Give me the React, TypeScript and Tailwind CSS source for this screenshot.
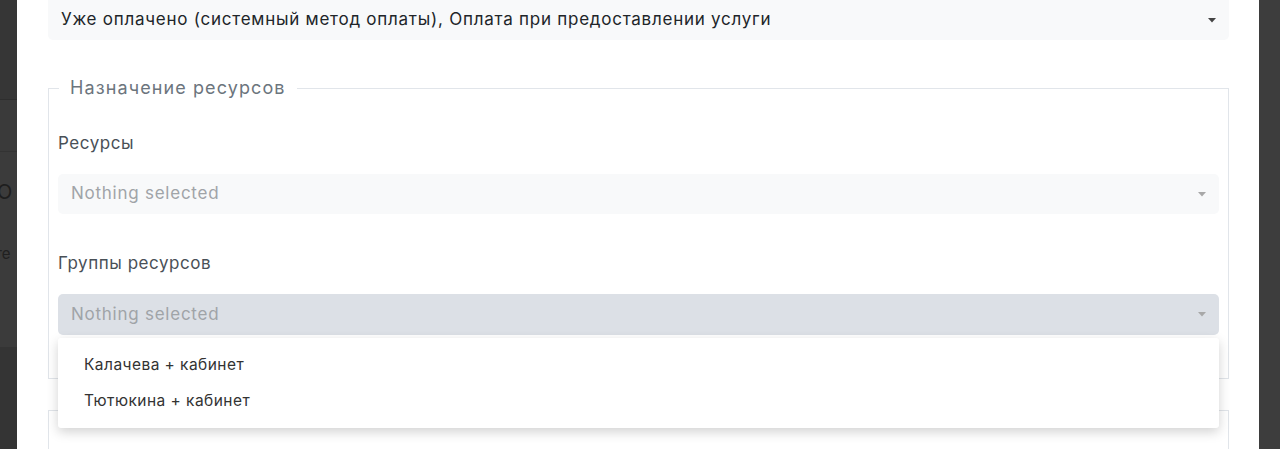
import React from "react";

function Caret({ color }: { color: string }) {
  return (
    <svg width="8" height="5" viewBox="0 0 8 5" className="shrink-0">
      <path d="M0 0 L8 0 L4 4.5 Z" fill={color} />
    </svg>
  );
}

export default function App() {
  const font = { fontFamily: "Inter, 'Noto Sans', sans-serif" };
  return (
    <div className="relative flex h-[449px] w-[1280px] overflow-hidden bg-[#3c3c3c]" style={font}>
      {/* left backdrop strip showing page behind */}
      <div className="flex w-[17px] shrink-0 flex-col bg-[#3a3a3a]">
        <div className="h-[100px] shrink-0 border-b border-[#2e2e2e] bg-[#363636]" />
        <div className="h-[52px] shrink-0 border-b border-[#333]" />
        <div className="flex h-[195px] shrink-0 flex-col overflow-hidden bg-[#3b3b3b]">
          <div className="mt-[30px] ml-[-8px] text-[20px] leading-none text-[#1e1e1e]">Ю</div>
          <div className="mt-[44px] ml-[-5px] text-[15px] leading-none text-[#202020]">те</div>
        </div>
        <div className="flex-1 bg-[#343434]" />
      </div>

      {/* modal */}
      <div className="flex w-[1242px] shrink-0 flex-col bg-white pl-[31px] pr-[30px]">
        <div className="flex h-[40px] shrink-0 items-center justify-between rounded-b-[5px] bg-[#f8f9fa] pl-[13px] pr-[13px] text-[17px] tracking-[0.75px] text-[#212529]">
          <span>Уже оплачено (системный метод оплаты), Оплата при предоставлении услуги</span>
          <Caret color="#444" />
        </div>

        <div className="relative mt-[48px] h-[291px] shrink-0 border border-[#e1e5ea] px-[9px]">
          <div className="absolute left-[10px] top-[-12px] bg-white px-[11px] text-[18px] leading-[22px] tracking-[1.1px] text-[#6c757d]">
            Назначение ресурсов
          </div>
          <div className="mt-[42px] text-[17px] leading-[24px] tracking-[0.55px] text-[#495057]">Ресурсы</div>
          <div className="mt-[19px] flex h-[40px] shrink-0 items-center justify-between rounded-[5px] bg-[#f8f9fa] pl-[13px] pr-[13px] text-[17px] tracking-[0.75px] text-[#a0a4a8]">
            <span>Nothing selected</span>
            <Caret color="#a8a8a8" />
          </div>
          <div className="mt-[37px] text-[17px] leading-[24px] tracking-[0.55px] text-[#495057]">Группы ресурсов</div>
          <div className="mt-[19px] flex h-[41px] shrink-0 items-center justify-between rounded-[5px] bg-[#dce0e6] pl-[13px] pr-[13px] text-[17px] tracking-[0.75px] text-[#a0a4a8]">
            <span>Nothing selected</span>
            <Caret color="#a8a8a8" />
          </div>
        </div>

        <div className="mt-[31px] h-[60px] shrink-0 border border-b-0 border-[#e1e5ea]" />
      </div>

      <div className="flex-1 bg-[#3d3d3d]" />

      {/* dropdown menu */}
      <div className="absolute left-[58px] top-[338px] flex h-[90px] w-[1161px] flex-col justify-center rounded-[3px] bg-white pl-[26px] text-[15.5px] tracking-[0.45px] text-[#333] shadow-[0_4px_12px_rgba(0,0,0,0.18)]">
        <div className="leading-[36px]">Калачева + кабинет</div>
        <div className="leading-[36px]">Тютюкина + кабинет</div>
      </div>
    </div>
  );
}
